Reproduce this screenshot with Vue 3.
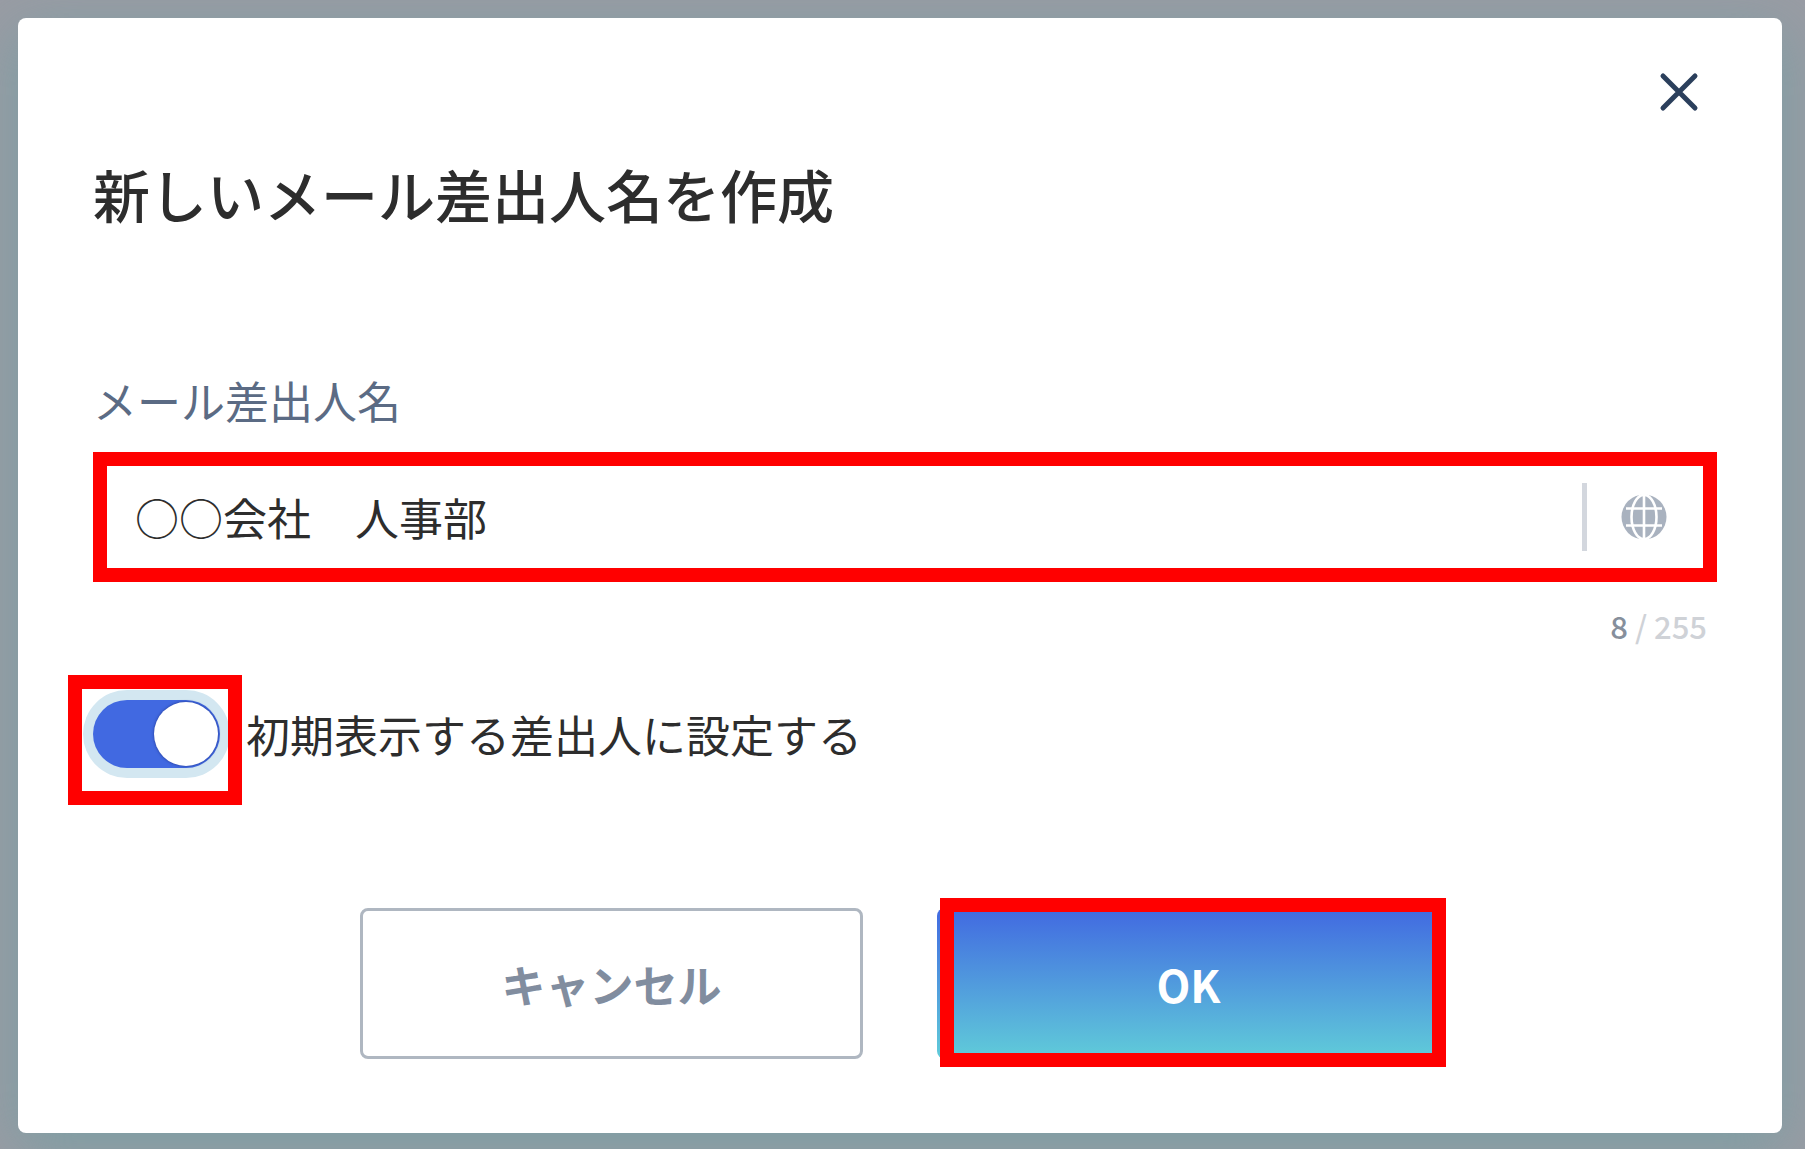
<script setup>
import { computed, ref } from 'vue'

const maxLength = 255
const senderName = ref('○○会社　人事部')
const isDefault = ref(true)
const count = computed(() => senderName.value.length)
</script>

<template>
  <main class="backdrop">
    <section class="modal" role="dialog" aria-modal="true" aria-labelledby="modal-title">
      <button class="close" type="button" aria-label="閉じる">
        <svg viewBox="0 0 48 48" width="48" height="48" aria-hidden="true">
          <path d="M8 8 40 40M40 8 8 40" fill="none" stroke="#2b3f5c" stroke-width="5" stroke-linecap="round" />
        </svg>
      </button>
      <h1 id="modal-title" class="title">新しいメール差出人名を作成</h1>

      <label class="label" for="sender">メール差出人名</label>
      <div class="field">
        <input id="sender" v-model="senderName" class="field-input" type="text" :maxlength="maxLength" />
        <button class="language" type="button" aria-label="言語">
          <svg viewBox="0 0 46 46" width="46" height="46" aria-hidden="true">
            <circle cx="23" cy="23" r="22.5" fill="#a9b2bf" />
            <g fill="none" stroke="#fff" stroke-width="2.6">
              <path d="M23 1v44M5 14.500h36M5 31.500h36" />
              <ellipse cx="23" cy="23" rx="12.500" ry="22" />
            </g>
          </svg>
        </button>
      </div>
      <p class="counter"><span class="count">{{ count }}</span> / {{ maxLength }}</p>

      <div class="option">
        <span class="switch-wrap">
          <input id="default-sender" v-model="isDefault" class="switch" type="checkbox" role="switch" />
        </span>
        <label class="option-label" for="default-sender">初期表示する差出人に設定する</label>
      </div>

      <div class="actions">
        <button class="button cancel" type="button">キャンセル</button>
        <button class="button ok" type="button">OK</button>
      </div>
    </section>
  </main>
</template>

<style>
body {
  margin: 0;
  background: #999ca4;
}
</style>

<style scoped>
* {
  box-sizing: border-box;
}

.backdrop {
  min-height: 100vh;
  padding: 18px 23px 16px 18px;
  overflow: hidden;
  background: #999ca4;
  color: #2d2d2d;
  font-family: "Noto Sans CJK JP", sans-serif;
  font-size: 44px;
}

.modal {
  display: flex;
  flex-direction: column;
  padding: 50px 65px 74px 75px;
  border-radius: 8px;
  background: #fff;
  box-shadow: 0 14px 56px rgba(110, 160, 164, 0.7);
}

button,
input {
  margin: 0;
  padding: 0;
  border: 0;
  background: none;
  color: inherit;
  font: inherit;
}

button {
  cursor: pointer;
}

svg {
  display: block;
}

.close {
  align-self: flex-end;
  margin-right: 14px;
}

.title {
  margin: 37px 0 0;
  font-size: 57px;
  font-weight: 500;
  line-height: 80px;
}

.label {
  margin-top: 137px;
  color: #5b6b84;
  line-height: 60px;
}

.field {
  display: flex;
  align-items: center;
  height: 130px;
  margin-top: 22px;
  padding: 0 36px 0 28px;
  border: 14px solid #f00;
}

.field-input {
  flex: 1;
  min-width: 0;
  height: 68px;
  outline: none;
}

.language {
  display: flex;
  align-items: center;
  height: 68px;
  padding-left: 34px;
  border-left: 5px solid #d3d7de;
}

.counter {
  margin: 20px 10px 0 0;
  color: #cfd2d7;
  font-size: 31px;
  font-weight: 500;
  line-height: 48px;
  text-align: right;
}

.count {
  color: #868f9c;
}

.option {
  display: flex;
  align-items: center;
  gap: 26px;
  margin-top: 50px;
}

.switch-wrap {
  position: relative;
  width: 127px;
  height: 68px;
}

.switch-wrap::after {
  content: "";
  position: absolute;
  inset: -25px -22px -37px -25px;
  border: 14px solid #f00;
  pointer-events: none;
}

.switch {
  display: flex;
  width: 127px;
  height: 68px;
  padding: 2px;
  border-radius: 34px;
  appearance: none;
  background: #b5bcc7;
}

.switch::before {
  content: "";
  width: 64px;
  height: 64px;
  border-radius: 50%;
  background: #fff;
  box-shadow: 0 0 3px rgba(10, 20, 90, 0.6);
}

.switch:checked {
  justify-content: flex-end;
  background: #4169e1;
  box-shadow: 0 0 0 10px #d3e7f1;
}

.option-label {
  line-height: 68px;
}

.actions {
  display: flex;
  justify-content: center;
  gap: 74px;
  margin-top: 140px;
  padding-right: 10px;
}

.button {
  position: relative;
  width: 503px;
  height: 151px;
  border-radius: 8px;
  font-weight: 700;
}

.cancel {
  border: 3px solid #afb7c1;
  color: #818d9f;
}

.ok {
  background: linear-gradient(#4169e1, #60ccd9);
  color: #fff;
}

.ok::after {
  content: "";
  position: absolute;
  inset: -10px -6px -8px 3px;
  border: 14px solid #f00;
  pointer-events: none;
}
</style>
